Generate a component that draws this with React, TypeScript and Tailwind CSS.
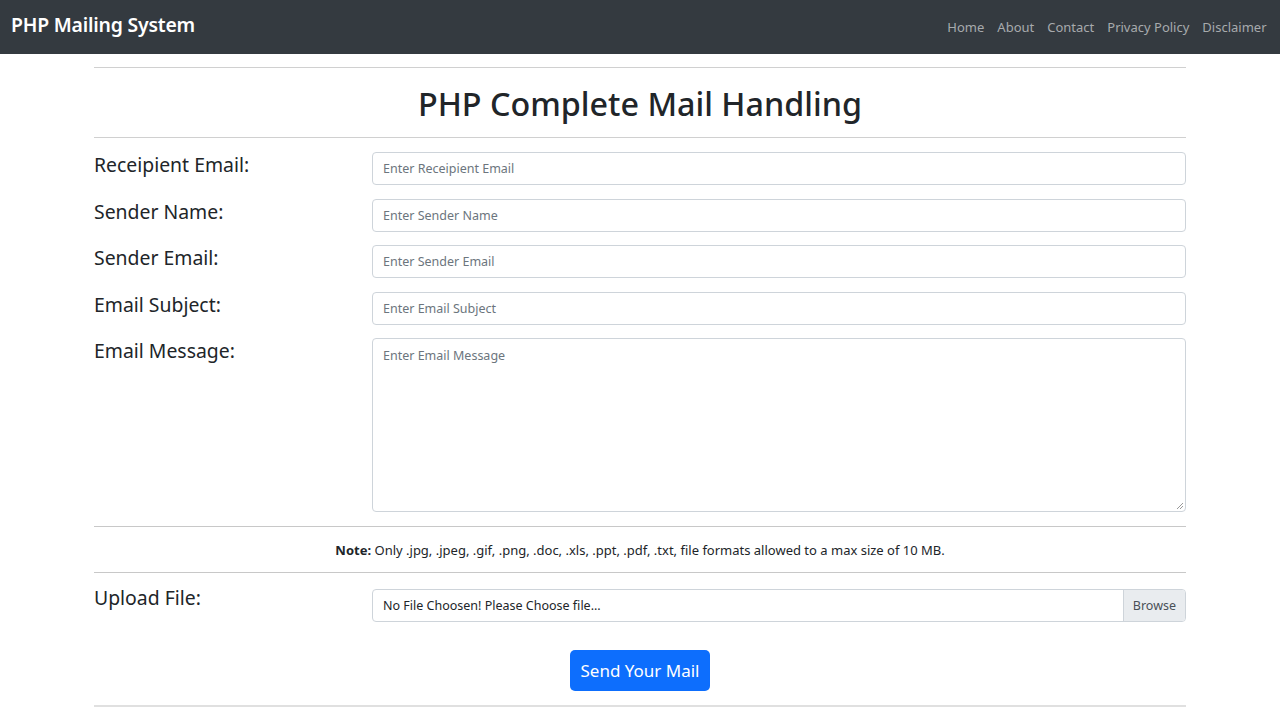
import React from "react";

const font = { fontFamily: '"Noto Sans", "Open Sans", sans-serif' };

function Row({ label, placeholder, textarea }: { label: string; placeholder: string; textarea?: boolean }) {
  return (
    <div className="flex items-start">
      <div className="w-[278px] shrink-0 pt-[1px] text-[19.4px] leading-[24px] text-[#212529]">{label}</div>
      {textarea ? (
        <div className="relative h-[174px] flex-1 rounded-[4px] border border-[#ced4da] bg-white px-[10px] py-[8px] text-[12.5px] text-[#6c757d]">
          {placeholder}
          <svg className="absolute bottom-[1px] right-[1px]" width="8" height="8" viewBox="0 0 8 8">
            <line x1="1" y1="7" x2="7" y2="1" stroke="#999" strokeWidth="1" />
            <line x1="4" y1="7" x2="7" y2="4" stroke="#999" strokeWidth="1" />
          </svg>
        </div>
      ) : (
        <div className="flex h-[33px] flex-1 items-center rounded-[4px] border border-[#ced4da] bg-white px-[10px] pt-[2px] text-[12.5px] text-[#6c757d]">
          {placeholder}
        </div>
      )}
    </div>
  );
}

export default function App() {
  return (
    <div className="min-h-[720px] bg-white" style={font}>
      <nav className="flex h-[54px] items-center justify-between bg-[#343a40] pl-[11px] pr-[7px]">
        <div className="pb-[5px] text-[19.4px] font-semibold tracking-[-0.2px] text-white">PHP Mailing System</div>
        <div className="flex items-center pt-[1px] text-[13px] text-[#a7aaad]">
          {["Home", "About", "Contact", "Privacy Policy", "Disclaimer"].map((t) => (
            <span key={t} className="px-[6.5px]">{t}</span>
          ))}
        </div>
      </nav>
      <div className="mx-auto w-[1092px]">
        <div className="mt-[13px] border-t border-[#d0d0d0]" />
        <h1 className="pb-[14px] pt-[16px] text-center text-[32.3px] font-medium leading-[39px] text-[#212529]">PHP Complete Mail Handling</h1>
        <div className="border-t border-[#d0d0d0]" />
        <div className="mt-[14px] flex flex-col gap-[13.5px]">
          <Row label="Receipient Email:" placeholder="Enter Receipient Email" />
          <Row label="Sender Name:" placeholder="Enter Sender Name" />
          <Row label="Sender Email:" placeholder="Enter Sender Email" />
          <Row label="Email Subject:" placeholder="Enter Email Subject" />
          <Row label="Email Message:" placeholder="Enter Email Message" textarea />
        </div>
        <div className="mt-[14px] border-t border-[#c8c8c8]" />
        <div className="flex h-[45px] items-center justify-center pt-[3px] text-[13px] text-[#212529]">
          <span><b className="font-bold">Note:</b> Only .jpg, .jpeg, .gif, .png, .doc, .xls, .ppt, .pdf, .txt, file formats allowed to a max size of 10 MB.</span>
        </div>
        <div className="border-t border-[#c8c8c8]" />
        <div className="mt-[16px] flex items-start">
          <div className="mt-[-3px] w-[278px] shrink-0 text-[19.4px] leading-[24px] text-[#212529]">Upload File:</div>
          <div className="flex h-[33px] flex-1 overflow-hidden rounded-[4px] border border-[#ced4da] text-[12.5px]">
            <div className="flex flex-1 items-center px-[10px] pt-[2px] text-[#212529]">No File Choosen! Please Choose file...</div>
            <div className="flex items-center border-l border-[#ced4da] bg-[#e9ecef] px-[9px] pt-[2px] text-[#495057]">Browse</div>
          </div>
        </div>
        <div className="mt-[28px] flex justify-center">
          <button className="h-[41px] w-[140px] rounded-[5px] bg-[#0d6efd] text-[17px] text-white">Send Your Mail</button>
        </div>
        <div className="mt-[14px] border-t-2 border-[#e0e0e0]" />
      </div>
    </div>
  );
}
